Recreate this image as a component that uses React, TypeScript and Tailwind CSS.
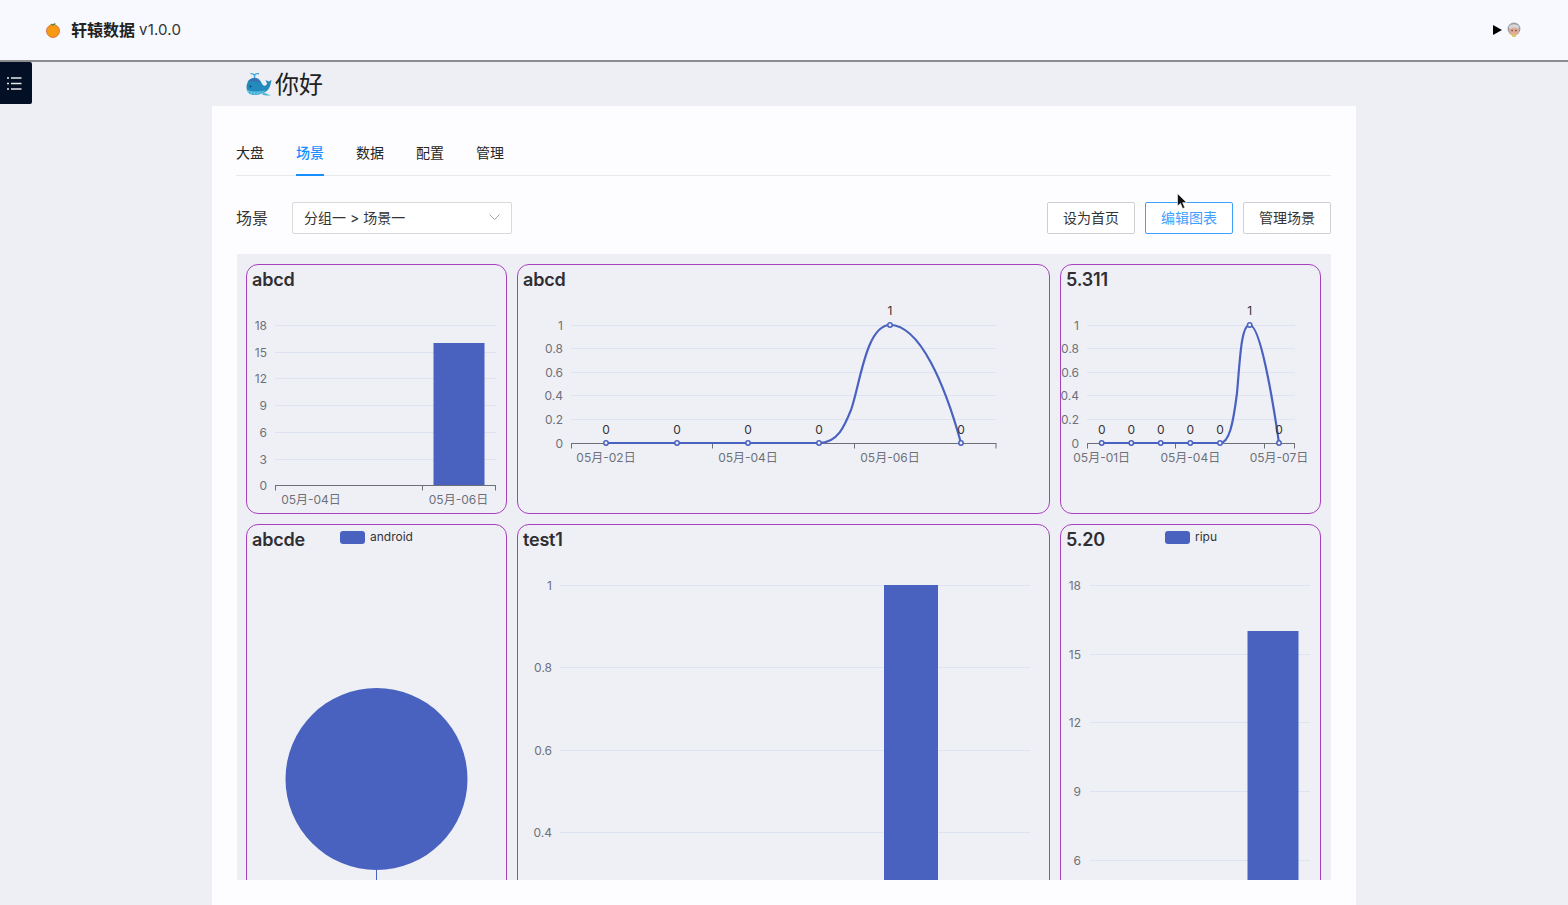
const TABS = ['大盘', '场景', '数据', '配置', '管理'];
const BAR = '#4962c0';
const GRID = '#dee3f3';
const AXIS = '#6e7079';

interface Tick { label: string; y: number }

// all chart coordinates are page pixels, the viewBox of each svg maps them into its card
const YTicks = ({ ticks, x1, x2, labelX }: { ticks: Tick[]; x1: number; x2: number; labelX: number }) => (
  <>
    {ticks.map((t) => (
      <g key={t.label}>
        {t.label !== '0' && <line x1={x1} x2={x2} y1={t.y} y2={t.y} stroke={GRID} />}
        <text x={labelX} y={t.y + 4} textAnchor="end" fontSize="12" fill={AXIS}>{t.label}</text>
      </g>
    ))}
  </>
);

const XAxis = ({ y, x1, x2, ticks, labels }: { y: number; x1: number; x2: number; ticks: number[]; labels: [string, number][] }) => (
  <>
    <line x1={x1} x2={x2} y1={y} y2={y} stroke={AXIS} />
    {ticks.map((t) => <line key={t} x1={t} x2={t} y1={y} y2={y + 5} stroke={AXIS} />)}
    {labels.map(([l, cx]) => (
      <text key={l} x={cx} y={y + 18} textAnchor="middle" fontSize="12" fill={AXIS}>{l}</text>
    ))}
  </>
);

const Points = ({ points, y0, peak, peakY }: { points: number[]; y0: number; peak: number; peakY: number }) => (
  <>
    {points.map((x) => {
      const isPeak = x === peak;
      const cy = isPeak ? peakY : y0;
      return (
        <g key={x}>
          <circle cx={x} cy={cy} r="2.2" fill="#eff0f6" stroke={BAR} strokeWidth="1.5" />
          <text x={x} y={isPeak ? cy - 10 : cy - 9} textAnchor="middle" fontSize="12" fill="#333">{isPeak ? '1' : '0'}</text>
        </g>
      );
    })}
  </>
);

const Card = ({ title, children, legend, legendX }: { title: string; children: React.ReactNode; legend?: string; legendX?: string }) => (
  <div className="relative flex flex-col rounded-xl border border-[#a840bf] bg-[#eff0f6]">
    <div className="h-[30px] pl-[5px] pt-[1px] text-[18px] leading-[27px] font-semibold tracking-[-0.2px] text-[#2f2f33]">{title}</div>
    {legend && (
      <div className={`absolute top-[5px] flex items-center gap-[5px] text-[12px] leading-[14px] text-[#333] ${legendX}`}>
        <span className="h-[13px] w-[25px] rounded-[3px] bg-[#4962c0]" />
        {legend}
      </div>
    )}
    {children}
  </div>
);

const Orange = () => (
  <svg width="16" height="16" viewBox="0 0 16 16">
    <circle cx="8" cy="9" r="6.5" fill="#f59a12" stroke="#d9703a" strokeWidth="0.9" />
    <path d="M8 3.4 C6.8 3.4 5.8 2.6 5.6 2 C6.6 1.6 7.4 1.8 8 2.4 C8.6 1.4 9.6 1 10.6 1.4 C10.4 2.6 9.4 3.4 8 3.4Z" fill="#3f8f3a" />
  </svg>
);

const Whale = () => (
  <svg width="26" height="24" viewBox="0 0 26 24">
    <path d="M8.5 6 V3 M4.5 1.6 C6 1.6 8 2.2 8.5 3.4 C9 2.2 11 1.4 13 1.8" stroke="#3aa8dc" strokeWidth="1.4" fill="none" />
    <path d="M0.5 15.5 C0.5 9.5 4.5 5.8 9 5.8 C13.5 5.8 15 10 16.5 12.5 C18 14.6 20.4 14 21 11.5 L19.5 8 L23 9.6 L25.6 7.8 L24.6 12 C24 16 21.6 19 18 20.6 C14 22.6 9 23.6 5.5 22.4 C2.5 21.4 0.5 19 0.5 15.5Z" fill="#2489bd" />
    <path d="M1.6 9.8 C3.4 7 6.4 6 9 6.4 C12 7 13 9 14 11 C10 9 5 9 1.6 9.8Z" fill="#3a6fb0" />
    <path d="M0.8 17.4 C5 20 12 20 19.5 18.6 C16 21.8 9.5 23.8 5.5 22.6 C3 21.8 1.4 20 0.8 17.4Z" fill="#62c8e4" />
    <path d="M18 20.4 C20 21.6 22 22.6 25 23 C23.4 23.8 19 23.8 16 22.4Z" fill="#4ab6da" />
    <circle cx="4.4" cy="14.4" r="0.9" fill="#0d3b5c" />
    <path d="M4 19v3M7 19.6v3.4M10 19.8v3M13 19.6v2.6M16 19v2" stroke="#2a8fc0" strokeWidth="0.6" />
  </svg>
);

const OldFace = () => (
  <svg width="14" height="16" viewBox="0 0 14 16">
    <circle cx="7" cy="7" r="6.4" fill="#9c9ca2" />
    <ellipse cx="7" cy="9" rx="4.8" ry="5" fill="#e0ad96" />
    <path d="M2.4 7.4 C4 4.8 10 4.8 11.6 7.4 L12 4.6 C10 1.6 4 1.6 2 4.6Z" fill="#d8d8dc" />
    <circle cx="5.1" cy="8.6" r="0.8" fill="#5a4034" />
    <circle cx="8.9" cy="8.6" r="0.8" fill="#5a4034" />
    <path d="M4.6 12 C6 13 8 13 9.4 12 L8.6 15 H5.4Z" fill="#d8cc58" />
  </svg>
);

const Cursor = () => (
  <svg width="11" height="17" viewBox="0 0 11 17" className="absolute left-[1177px] top-[193px]">
    <path d="M0.5 0.5 V13 L3.5 10.4 L5.6 15.6 L7.8 14.7 L5.6 9.6 H9.6Z" fill="#111" stroke="#fff" strokeWidth="0.6" />
  </svg>
);

export default function App() {
  return (
    <div className="relative flex h-[905px] w-[1568px] flex-col overflow-hidden bg-[#eeeff4] font-[Inter,'Noto_Sans_CJK_SC',sans-serif] text-[#262626]">
      <header className="flex h-[62px] shrink-0 items-center justify-between border-b-2 border-[#8c8c8e] bg-[#f7f9fe] pl-[45px] pr-[47px]">
        <div className="flex items-center">
          <Orange />
          <span className="ml-[10px] text-[16px] font-semibold text-[#222]">轩辕数据</span>
          <span className="ml-[4px] pt-px text-[15px] tracking-[0.2px] text-[#333]">v1.0.0</span>
        </div>
        <div className="flex items-center gap-[5px]">
          <svg width="9" height="10" viewBox="0 0 9 10"><path d="M0 0 L9 5 L0 10Z" fill="#000" /></svg>
          <OldFace />
        </div>
      </header>

      <button className="absolute left-0 top-[62px] flex h-[42px] w-[32px] items-center rounded-r-[2px] bg-[#020f24] pl-[7px]">
        <svg width="15" height="14" viewBox="0 0 15 14" stroke="#e6e8ee" strokeWidth="1.4">
          <path d="M0 2h2M4 2h10.5M0 7.5h2M4 7.5h10.5M0 13h2M4 13h10.5" />
        </svg>
      </button>

      <div className="flex h-[44px] shrink-0 items-center pl-[246px]">
        <Whale />
        <h1 className="ml-[3px] pt-px text-[24px] font-normal text-[#222]">你好</h1>
      </div>

      <main className="ml-[212px] flex w-[1144px] flex-1 flex-col bg-[#fdfdff] pl-6 pr-[25px] pt-[34px]">
        <nav className="flex h-[36px] gap-8 border-b border-[#e8e9ee] text-[14px] leading-[26px]">
          {TABS.map((t) => (
            <a key={t} className={t === '场景' ? 'h-[36px] border-b-2 border-[#1890ff] font-medium text-[#1890ff]' : 'text-[#262626]'}>{t}</a>
          ))}
        </nav>

        <div className="mt-[26px] flex h-8 items-center justify-between">
          <div className="flex items-center">
            <span className="w-[56px] text-[16px] text-[#333]">场景</span>
            <div className="flex h-8 w-[220px] items-center justify-between rounded-[2px] border border-[#d9d9d9] bg-white pb-[2px] pl-[11px] pr-[11px] text-[14px] text-[#333]">
              分组一 &gt; 场景一
              <svg width="11" height="8" viewBox="0 0 11 8" fill="none" stroke="#a6a6a6"><path d="M0.5 1.5 L5.5 6.5 L10.5 1.5" /></svg>
            </div>
          </div>
          <div className="flex gap-[10px] text-[14px]">
            <button className="h-8 w-[88px] rounded-[2px] border border-[#d0d0d4] bg-white pb-[2px] text-[#333]">设为首页</button>
            <button className="h-8 w-[88px] rounded-[2px] border border-[#40a0ff] bg-white pb-[2px] text-[#40a0ff]">编辑图表</button>
            <button className="h-8 w-[88px] rounded-[2px] border border-[#d0d0d4] bg-white pb-[2px] text-[#333]">管理场景</button>
          </div>
        </div>

        <section className="ml-px mt-5 h-[626px] overflow-hidden bg-[#eeeff4] pl-[9px] pt-[10px]">
          <div className="grid grid-cols-[261px_533px_261px] grid-rows-[250px_392px] gap-[10px]">
            <Card title="abcd">
              <svg width="259" height="218" viewBox="247 295 259 218" className="block">
                <YTicks x1={275} x2={496} labelX={267} ticks={[
                  { label: '18', y: 325.5 }, { label: '15', y: 352.5 }, { label: '12', y: 378.5 },
                  { label: '9', y: 405.5 }, { label: '6', y: 432.5 }, { label: '3', y: 459.5 }, { label: '0', y: 485.5 },
                ]} />
                <rect x="433.5" y="343" width="51" height="142.5" fill={BAR} />
                <XAxis y={485.5} x1={275} x2={496} ticks={[275.5, 422.5, 495.5]} labels={[['05月-04日', 311], ['05月-06日', 458.5]]} />
              </svg>
            </Card>

            <Card title="abcd">
              <svg width="531" height="218" viewBox="518 295 531 218" className="block">
                <YTicks x1={571} x2={996} labelX={563} ticks={[
                  { label: '1', y: 325.5 }, { label: '0.8', y: 348.5 }, { label: '0.6', y: 372.5 },
                  { label: '0.4', y: 395.5 }, { label: '0.2', y: 419.5 }, { label: '0', y: 443.5 },
                ]} />
                <XAxis y={443.5} x1={571} x2={996.5} ticks={[571.5, 712.5, 854.5, 996]} labels={[['05月-02日', 606], ['05月-04日', 748], ['05月-06日', 890]]} />
                <path d="M606 443 H819 C838 443 845 425 851 410 C860 385 866 325 890 325 C920 325 945 385 961 443" fill="none" stroke={BAR} strokeWidth="2.2" />
                <Points points={[606, 677, 748, 819, 890, 961]} y0={443} peak={890} peakY={325} />
              </svg>
            </Card>

            <Card title="5.311">
              <svg width="259" height="218" viewBox="1061 295 259 218" className="block">
                <YTicks x1={1087} x2={1295} labelX={1079} ticks={[
                  { label: '1', y: 325.5 }, { label: '0.8', y: 348.5 }, { label: '0.6', y: 372.5 },
                  { label: '0.4', y: 395.5 }, { label: '0.2', y: 419.5 }, { label: '0', y: 443.5 },
                ]} />
                <XAxis y={443.5} x1={1087} x2={1295} ticks={[1087.5, 1175.5, 1264.5, 1294.5]} labels={[['05月-01日', 1101.7], ['05月-04日', 1190.3], ['05月-07日', 1279]]} />
                <path d="M1102 443 H1220 C1229 443 1233 425 1237 393 C1240 360 1241 325 1249.7 325 C1260 325 1272 395 1279 443" fill="none" stroke={BAR} strokeWidth="2.2" />
                <Points points={[1101.7, 1131.3, 1160.7, 1190.3, 1220, 1249.7, 1279]} y0={443} peak={1249.7} peakY={325} />
              </svg>
            </Card>

            <Card title="abcde" legend="android" legendX="left-[93px]">
              <svg width="259" height="360" viewBox="247 555 259 360" className="block">
                <circle cx="376.5" cy="779" r="91" fill={BAR} />
                <line x1="376.5" x2="376.5" y1="870" y2="890" stroke={BAR} />
              </svg>
            </Card>

            <Card title="test1">
              <svg width="531" height="360" viewBox="518 555 531 360" className="block">
                <YTicks x1={560} x2={1030} labelX={552} ticks={[
                  { label: '1', y: 585.5 }, { label: '0.8', y: 667.5 }, { label: '0.6', y: 750.5 }, { label: '0.4', y: 832.5 },
                ]} />
                <rect x="884" y="585" width="54" height="330" fill={BAR} />
              </svg>
            </Card>

            <Card title="5.20" legend="ripu" legendX="left-[104px]">
              <svg width="259" height="360" viewBox="1061 555 259 360" className="block">
                <YTicks x1={1090} x2={1310} labelX={1081} ticks={[
                  { label: '18', y: 585.5 }, { label: '15', y: 654.5 }, { label: '12', y: 722.5 }, { label: '9', y: 791.5 }, { label: '6', y: 860.5 },
                ]} />
                <rect x="1247.5" y="631" width="51" height="284" fill={BAR} />
              </svg>
            </Card>
          </div>
        </section>
      </main>

      <Cursor />
    </div>
  );
}
